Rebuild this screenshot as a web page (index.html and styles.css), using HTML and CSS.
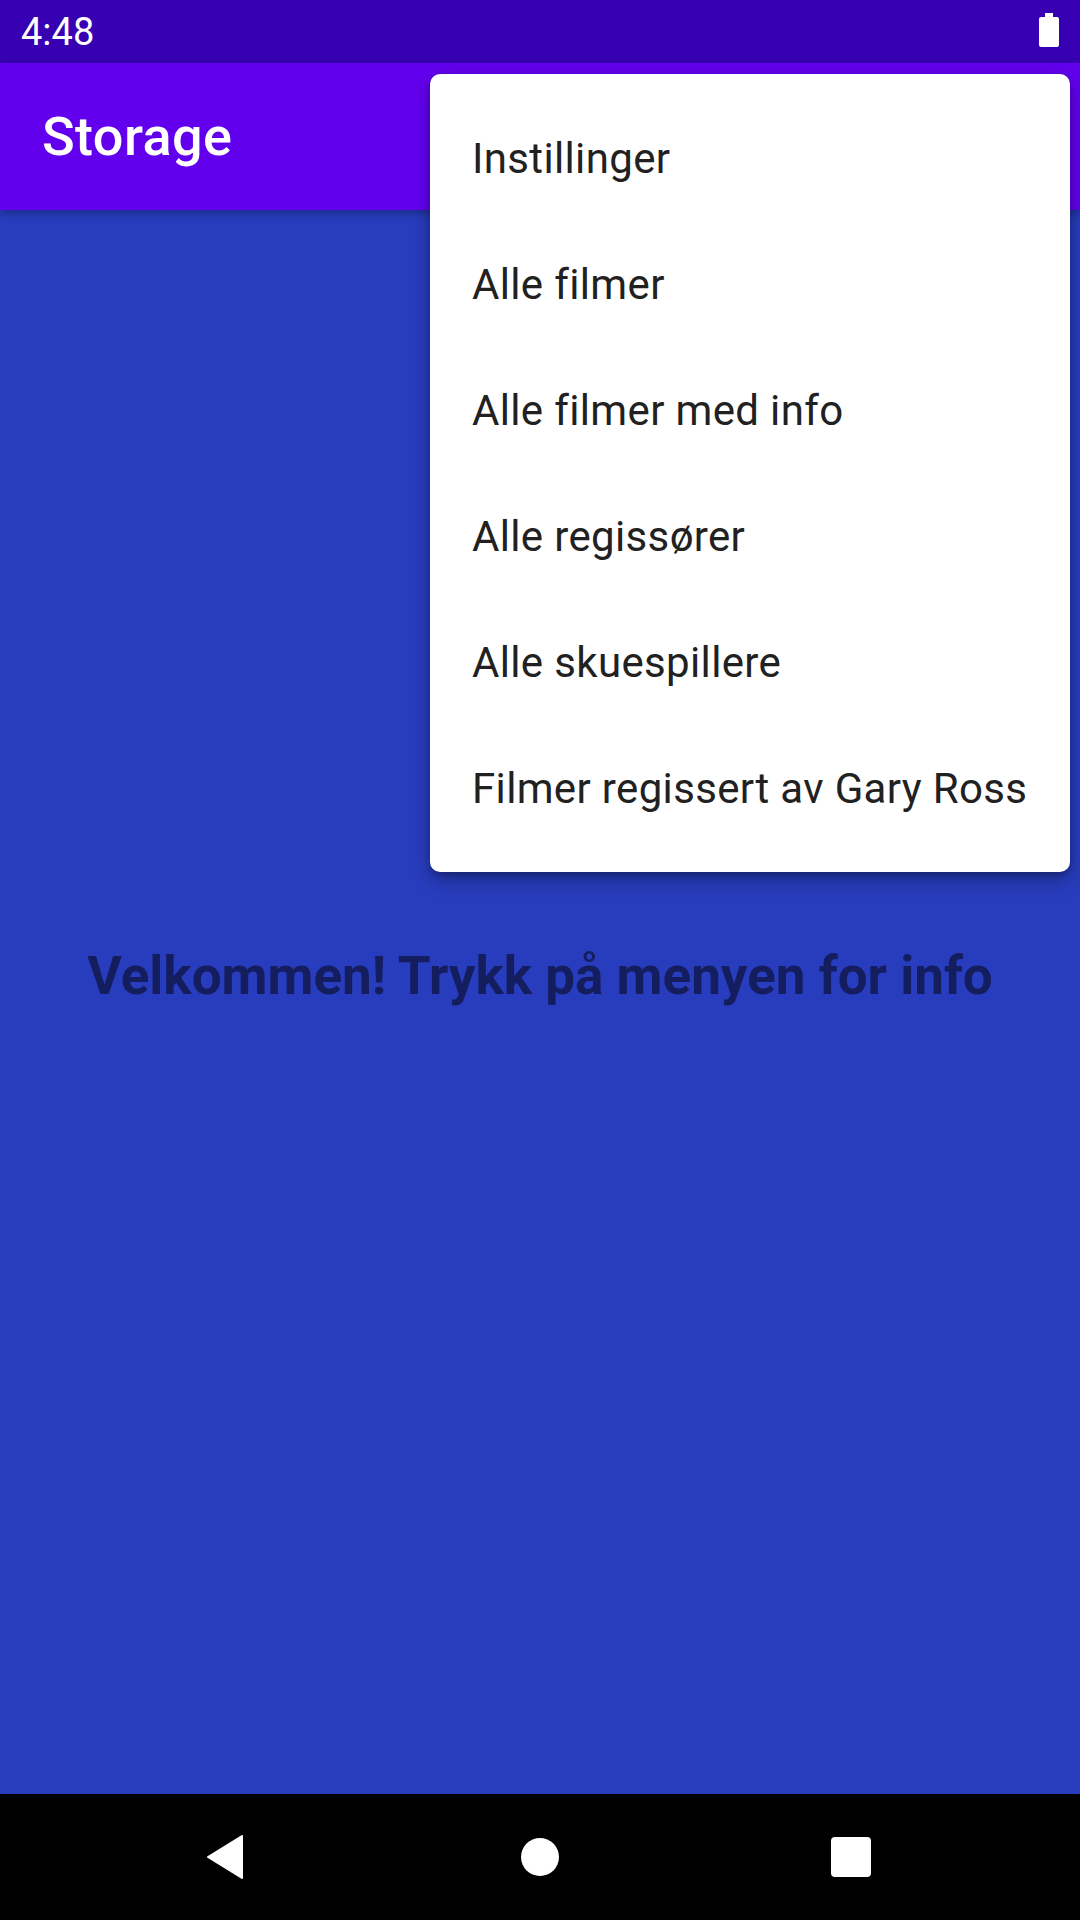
FILE: index.html
```html
<!DOCTYPE html>
<html>
<head>
<meta charset="utf-8">
<link rel="stylesheet" href="styles.css">
</head>
<body>
<div class="screen">
  <div class="statusbar">
    <span class="time">4:48</span>
    <svg class="battery" width="20" height="34" viewBox="0 0 20 34"><path d="M6 0h8v4h4a2 2 0 0 1 2 2v26a2 2 0 0 1-2 2H2a2 2 0 0 1-2-2V6a2 2 0 0 1 2-2h4z" fill="#fff"/></svg>
  </div>
  <div class="appbar"><span class="title">Storage</span></div>
  <div class="content">
    <div class="welcome">Velkommen! Trykk på menyen for info</div>
  </div>
  <div class="navbar">
    <svg class="nav-back" width="38" height="44" viewBox="0 0 38 44"><path d="M36 1 L36 43 L2 22 Z" fill="#fff" stroke="#fff" stroke-width="2" stroke-linejoin="round"/></svg>
    <div class="nav-home"></div>
    <div class="nav-recent"></div>
  </div>
  <div class="menu">
    <div class="menu-item">Instillinger</div>
    <div class="menu-item">Alle filmer</div>
    <div class="menu-item">Alle filmer med info</div>
    <div class="menu-item">Alle regissører</div>
    <div class="menu-item">Alle skuespillere</div>
    <div class="menu-item">Filmer regissert av Gary Ross</div>
  </div>
</div>
</body>
</html>
```
FILE: styles.css
```css
* { box-sizing: border-box; }
html, body { margin: 0; padding: 0; }
body { font-family: Roboto, "Noto Sans", sans-serif; }
.screen {
  position: relative;
  width: 1080px;
  height: 1920px;
  display: flex;
  flex-direction: column;
  overflow: hidden;
  background: #283dbe;
}
.statusbar {
  height: 63px;
  background: #3700b3;
  display: flex;
  align-items: center;
  justify-content: space-between;
  padding: 0 21px 0 21px;
  color: #fff;
}
.time { font-size: 38px; line-height: 1; }
.battery { margin-top: -4px; }
.appbar {
  height: 147px;
  background: #6200ee;
  display: flex;
  align-items: center;
  padding-left: 42px;
  box-shadow: 0 4px 8px rgba(0,0,0,0.25);
  position: relative;
  z-index: 1;
}
.title { color: #fff; font-size: 54px; font-weight: 500; letter-spacing: 0.4px; }
.content {
  flex: 1;
  display: flex;
  flex-direction: column;
  align-items: center;
  padding-top: 733px;
}
.welcome {
  font-size: 53px;
  line-height: 66px;
  font-weight: 700;
  color: #141d5e;
}
.navbar {
  height: 126px;
  background: #000;
  display: flex;
  align-items: center;
  position: relative;
}
.nav-back { position: absolute; left: 206px; top: 41px; }
.nav-home {
  position: absolute; left: 521px; top: 44px;
  width: 38px; height: 38px; border-radius: 50%; background: #fff;
}
.nav-recent {
  position: absolute; left: 831px; top: 43px;
  width: 40px; height: 40px; border-radius: 4px; background: #fff;
}
.menu {
  position: absolute;
  top: 74px;
  left: 430px;
  width: 640px;
  padding: 21px 0 21px;
  background: #fff;
  border-radius: 10px;
  box-shadow: 0 8px 20px rgba(0,0,0,0.3), 0 3px 6px rgba(0,0,0,0.2);
  z-index: 2;
}
.menu-item {
  height: 126px;
  display: flex;
  align-items: center;
  padding-left: 42px;
  font-size: 42px;
  letter-spacing: 0.35px;
  color: #212121;
  white-space: nowrap;
}
```
